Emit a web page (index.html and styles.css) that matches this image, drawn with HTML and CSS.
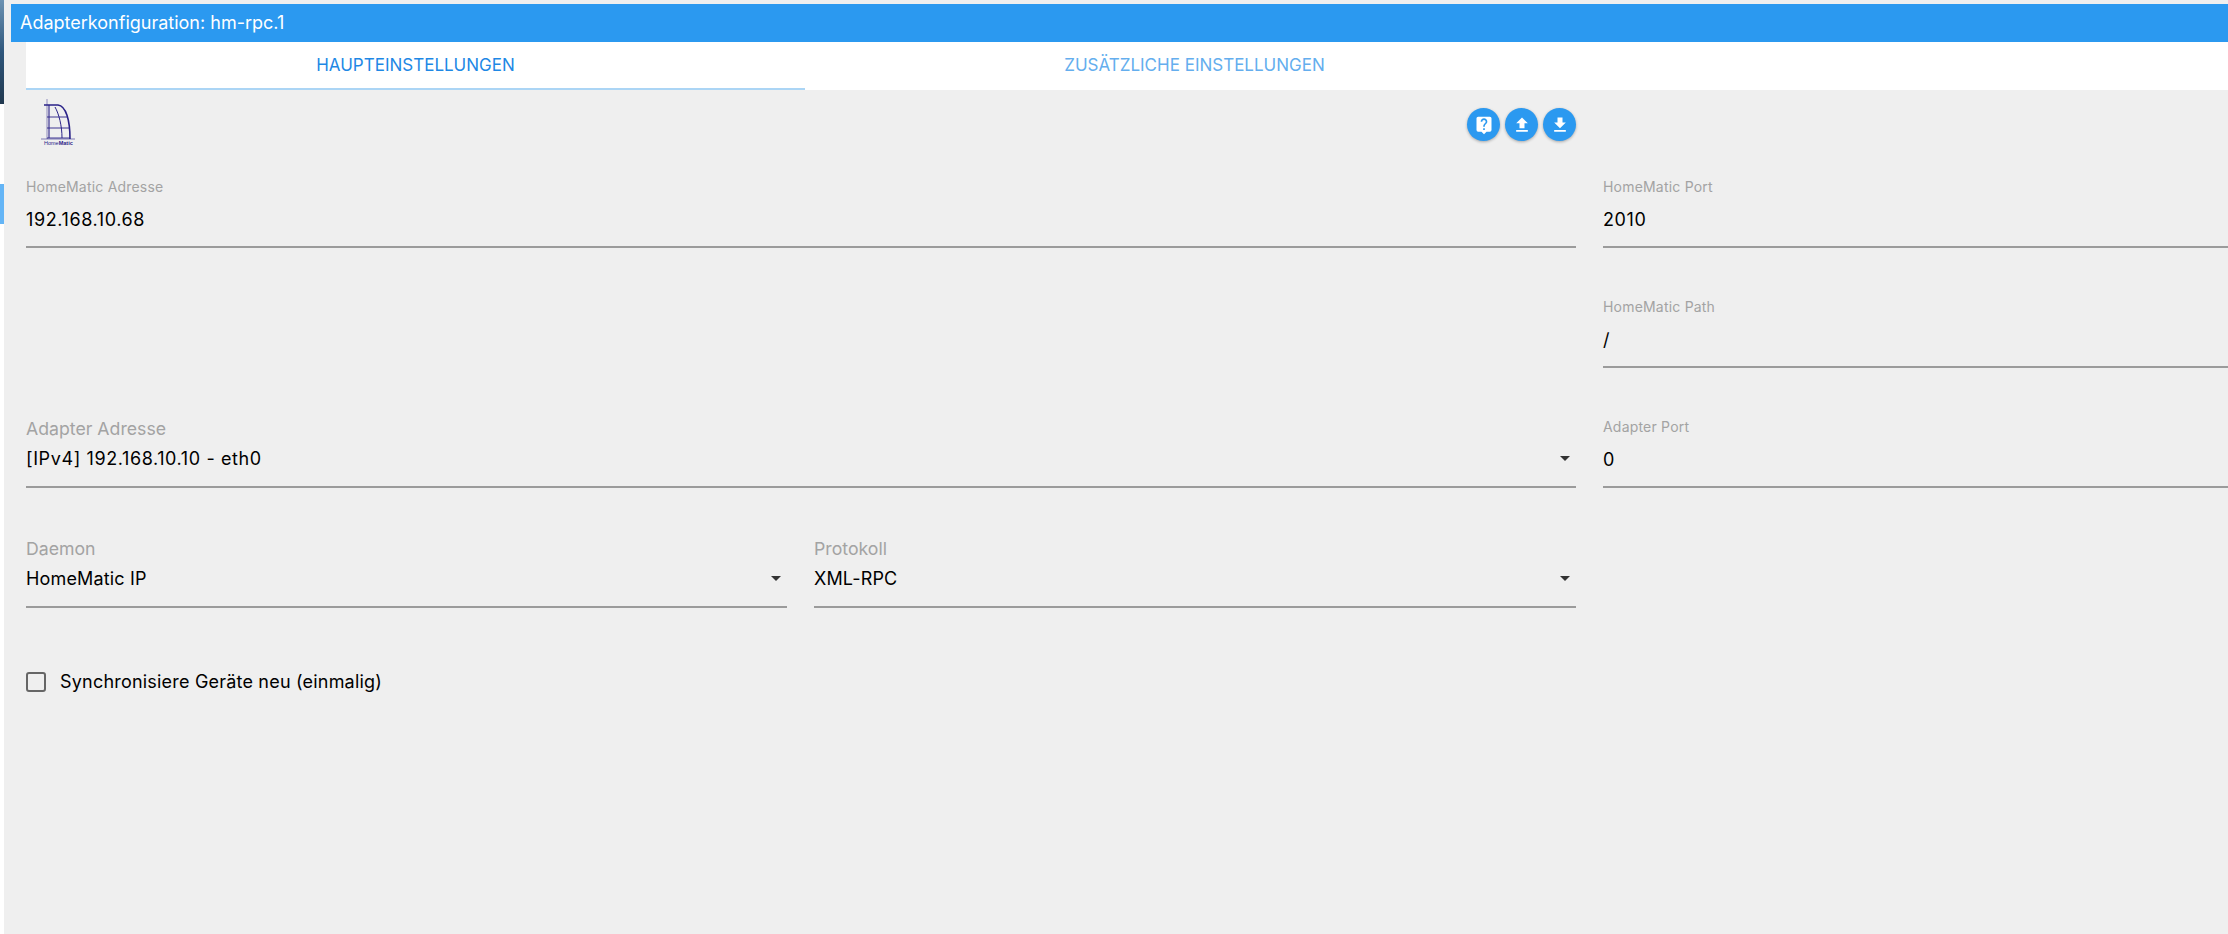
FILE: index.html
```html
<!DOCTYPE html>
<html lang="de">
<head>
<meta charset="utf-8">
<title>Adapterkonfiguration</title>
<link rel="stylesheet" href="styles.css">
</head>
<body>
<div class="shell">
  <aside class="edge">
    <div class="edge-photo"></div>
    <div class="edge-gap"></div>
    <div class="edge-active"></div>
  </aside>
  <main class="dialog">
    <header class="titlebar">Adapterkonfiguration: hm-rpc.1</header>
    <div class="content">
      <nav class="tabs">
        <div class="tab tab-active">Haupteinstellungen</div>
        <div class="tab">Zusätzliche Einstellungen</div>
      </nav>
      <div class="toolbar">
        <svg class="logo" viewBox="0 0 40 50" width="40" height="50" aria-hidden="true">
          <g fill="none" stroke="#2a2288">
            <path d="M8 1V41" stroke-width=".7" opacity=".7"/>
            <path d="M10 7V40" stroke-width="1.1"/>
            <path d="M5 7H19C27 8 31 22 31 41" stroke-width="1.6"/>
            <path d="M8 19H28M8 30H30M8 40H31" stroke-width=".9"/>
            <path d="M16 9C20 16 23 28 23 40" stroke-width="1"/>
            <path d="M2 41H36" stroke-width=".8" opacity=".7"/>
          </g>
          <text class="logo-text" x="5" y="47">Home<tspan class="logo-bold">Matic</tspan></text>
        </svg>
        <div class="actions">
          <button class="fab"><svg viewBox="0 0 24 24" width="20" height="20"><path fill="#fff" d="M19 2H5a2 2 0 0 0-2 2v14a2 2 0 0 0 2 2h4l3 3 3-3h4a2 2 0 0 0 2-2V4a2 2 0 0 0-2-2zm-6 16h-2v-2h2v2zm2.07-7.75-.9.92C13.45 11.9 13 12.5 13 14h-2v-.5c0-1.1.45-2.1 1.17-2.83l1.24-1.26c.37-.36.59-.86.59-1.41 0-1.1-.9-2-2-2s-2 .9-2 2H8c0-2.21 1.79-4 4-4s4 1.79 4 4c0 .88-.36 1.68-.93 2.25z"/></svg></button>
          <button class="fab"><svg viewBox="0 0 24 24" width="20" height="20"><path fill="#fff" d="M9 16h6v-6h4l-7-7-7 7h4zm-4 2h14v2H5z"/></svg></button>
          <button class="fab"><svg viewBox="0 0 24 24" width="20" height="20"><path fill="#fff" d="M19 9h-4V3H9v6H5l7 7 7-7zM5 18v2h14v-2H5z"/></svg></button>
        </div>
      </div>
      <div class="form">
        <div class="row">
          <div class="main-col"><div class="field"><label class="label-small">HomeMatic Adresse</label><div class="value value-num">192.168.10.68</div></div></div>
          <div class="side-col"><div class="field"><label class="label-small">HomeMatic Port</label><div class="value value-num">2010</div></div></div>
        </div>
        <div class="row">
          <div class="main-col"></div>
          <div class="side-col"><div class="field"><label class="label-small">HomeMatic Path</label><div class="value">/</div></div></div>
        </div>
        <div class="row">
          <div class="main-col"><div class="field select"><label class="label-large">Adapter Adresse</label><div class="value value-num">[IPv4] 192.168.10.10 - eth0</div></div></div>
          <div class="side-col"><div class="field"><label class="label-small">Adapter Port</label><div class="value">0</div></div></div>
        </div>
        <div class="row">
          <div class="main-col split">
            <div class="field select"><label class="label-large">Daemon</label><div class="value">HomeMatic IP</div></div>
            <div class="field select"><label class="label-large">Protokoll</label><div class="value">XML-RPC</div></div>
          </div>
          <div class="side-col"></div>
        </div>
        <label class="check"><span class="box"></span><span>Synchronisiere Geräte neu (einmalig)</span></label>
      </div>
    </div>
  </main>
</div>
</body>
</html>
```
FILE: styles.css
```css
* { box-sizing: border-box; }
html, body { margin: 0; height: 100%; overflow: hidden; }
body { background: #efefef; font-family: Inter, "Open Sans", "Liberation Sans", sans-serif; color: #000; }
.shell { display: flex; height: 934px; }
.edge { width: 4px; flex: none; background: #fff; display: flex; flex-direction: column; }
.edge-photo { height: 104px; background: linear-gradient(180deg, #6d93b3 0%, #2f577c 50%, #21384f 100%); }
.edge-gap { height: 80px; }
.edge-active { height: 40px; background: #64b5f6; }
.dialog { flex: 1; min-width: 0; padding: 4px 0 0 7px; }
.titlebar { height: 38px; background: #2b99f0; color: #fff; font-size: 18px; line-height: 38px; padding-left: 9px; }
.content { padding-left: 15px; }
.tabs { display: flex; background: #fff; height: 48px; }
.tab { width: 779px; height: 48px; text-align: center; font-size: 17px; line-height: 46px; text-transform: uppercase; color: #64aeee; }
.tab-active { color: #1e88e5; border-bottom: 2px solid #abd5f5; }
.toolbar { display: flex; height: 76px; width: 1550px; padding: 8px 0 0 13px; justify-content: space-between; }
.logo-text { font-size: 5.5px; fill: #2a2288; font-family: "Liberation Sans", sans-serif; }
.logo-bold { font-weight: 700; }
.actions { display: flex; gap: 5px; padding-top: 10px; }
.fab { width: 33px; height: 33px; border: 0; padding: 0; border-radius: 50%; background: #2b99f0; display: flex; align-items: center; justify-content: center; box-shadow: 0 1px 3px rgba(0,0,0,.3); }
.row { display: flex; height: 120px; gap: 27px; }
.main-col { width: 1550px; flex: none; }
.side-col { flex: 1; min-width: 0; }
.split { display: flex; gap: 27px; }
.split .field { flex: 1; }
.split .field:first-child { flex: none; width: 761px; }
.field { position: relative; height: 82px; border-bottom: 2px solid #9b9b9b; padding-top: 11px; }
.field.select { padding-top: 12px; }
.label-small { display: block; font-size: 14px; line-height: 20px; letter-spacing: .2px; color: #a3a3a3; height: 31px; }
.label-large { display: block; font-size: 17.7px; line-height: 22px; color: #a3a3a3; height: 29px; }
.value { font-size: 18px; line-height: 24px; letter-spacing: .15px; }
.value-num { letter-spacing: .6px; }
.select::after { content: ""; position: absolute; right: 6px; top: 50px; border-style: solid; border-width: 5px 5px 0; border-color: #333 transparent transparent; }
.check { display: flex; align-items: center; gap: 14px; font-size: 18px; line-height: 24px; letter-spacing: .2px; margin-top: 24px; }
.box { width: 20px; height: 20px; border: 2px solid #666; border-radius: 3px; }
```
